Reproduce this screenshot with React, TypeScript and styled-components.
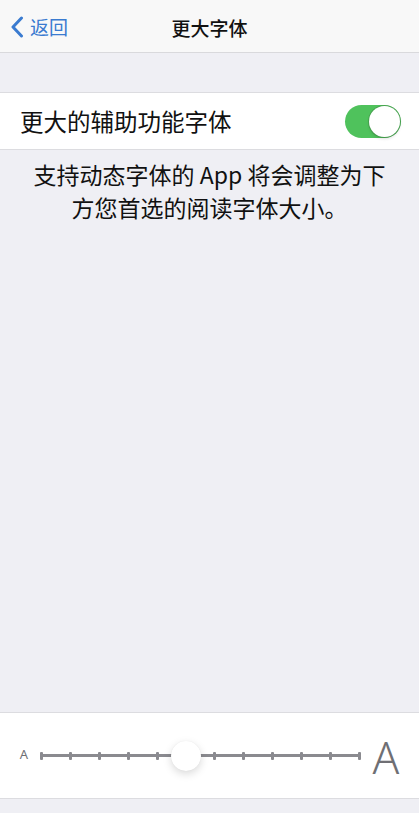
import styled, { createGlobalStyle } from 'styled-components'

const GlobalStyle = createGlobalStyle`
  html, body {
    margin: 0;
    padding: 0;
    background: #efeff4;
  }
  body {
    font-family: 'Noto Sans CJK SC', 'Noto Sans', sans-serif;
    -webkit-font-smoothing: antialiased;
  }
`

const STEPS = 12
const CURRENT_STEP = 5

const App = () => {
  const ticks = Array.from({ length: STEPS }, (_, i) => i)

  return (
    <>
      <GlobalStyle />
      <Screen>
        <NavBar>
          <BackButton>
            <svg width="14" height="22" viewBox="0 0 14 22" fill="none">
              <path
                d="M11.5 2 L3 11 L11.5 20"
                stroke="#3a7bd0"
                strokeWidth="3"
                strokeLinecap="round"
                strokeLinejoin="round"
              />
            </svg>
            <span>返回</span>
          </BackButton>
          <Title>更大字体</Title>
        </NavBar>

        <Group>
          <Row>
            <RowLabel>更大的辅助功能字体</RowLabel>
            <Toggle on>
              <Knob />
            </Toggle>
          </Row>
        </Group>

        <Footnote>
          支持动态字体的 App 将会调整为下
          <br />
          方您首选的阅读字体大小。
        </Footnote>

        <Spacer />

        <SliderPanel>
          <SizeLetter size={13}>A</SizeLetter>
          <Track>
            {ticks.map((i) => (i === CURRENT_STEP ? <TickGap key={i} /> : <Tick key={i} />))}
            <Thumb style={{ left: `${(CURRENT_STEP / (STEPS - 1)) * 100}%` }} />
          </Track>
          <SizeLetter size={44}>A</SizeLetter>
        </SliderPanel>
        <BottomFill />
      </Screen>
    </>
  )
}

const Screen = styled.div`
  display: flex;
  flex-direction: column;
  width: 419px;
  height: 813px;
  background: #efeff4;
  overflow: hidden;
`

const NavBar = styled.div`
  position: relative;
  display: flex;
  align-items: center;
  justify-content: center;
  height: 53px;
  flex-shrink: 0;
  background: #f8f8f8;
  border-bottom: 1px solid #d9d9dc;
  box-sizing: border-box;
`

const BackButton = styled.div`
  position: absolute;
  left: 10px;
  top: 0;
  bottom: 0;
  display: flex;
  align-items: center;
  gap: 6px;
  color: #3a7bd0;
  font-size: 19px;
  svg {
    margin-top: 1px;
  }
`

const Title = styled.div`
  font-size: 19px;
  font-weight: 500;
  color: #111;
  margin-top: 2px;
`

const Group = styled.div`
  margin-top: 39px;
  background: #fff;
  border-top: 1px solid #dcdce0;
  border-bottom: 1px solid #dcdce0;
`

const Row = styled.div`
  display: flex;
  align-items: center;
  justify-content: space-between;
  height: 56px;
  padding: 0 18px 0 20px;
`

const RowLabel = styled.div`
  font-size: 23.5px;
  color: #111;
`

const Toggle = styled.div<{ on: boolean }>`
  display: flex;
  align-items: center;
  justify-content: ${({ on }: { on: boolean }) => (on ? 'flex-end' : 'flex-start')};
  width: 56px;
  height: 33px;
  padding: 1px;
  box-sizing: border-box;
  border-radius: 17px;
  background: ${({ on }: { on: boolean }) => (on ? '#4fc25c' : '#e5e5ea')};
`

const Knob = styled.div`
  width: 31px;
  height: 31px;
  border-radius: 50%;
  background: #fff;
  box-shadow: 0 0 0 1px rgba(60, 110, 60, 0.35), 0 2px 3px rgba(0, 0, 0, 0.12);
`

const Footnote = styled.div`
  margin-top: 8px;
  text-align: center;
  font-size: 23px;
  line-height: 33px;
  color: #111;
`

const Spacer = styled.div`
  flex: 1;
`

const SliderPanel = styled.div`
  display: flex;
  align-items: center;
  height: 87px;
  flex-shrink: 0;
  padding: 0 19px 0 19px;
  box-sizing: border-box;
  background: #fff;
  border-top: 1px solid #dcdce0;
  border-bottom: 1px solid #dcdce0;
`

const SizeLetter = styled.div<{ size: number }>`
  font-family: 'Noto Sans', 'Liberation Sans', sans-serif;
  font-size: ${({ size }: { size: number }) => size}px;
  line-height: 1;
  color: ${({ size }: { size: number }) => (size > 20 ? '#6f6f74' : '#6f6f74')};
  font-weight: ${({ size }: { size: number }) => (size > 20 ? 300 : 400)};
  width: ${({ size }: { size: number }) => (size > 20 ? '28px' : '10px')};
  text-align: center;
  margin-top: ${({ size }: { size: number }) => (size > 20 ? '2px' : '-2px')};
`

const Track = styled.div`
  position: relative;
  flex: 1;
  display: flex;
  align-items: center;
  justify-content: space-between;
  height: 32px;
  margin: 0 12px 0 12px;

  &::before {
    content: '';
    position: absolute;
    left: 0;
    right: 0;
    top: 50%;
    height: 3px;
    margin-top: -1.5px;
    background: #8a8a8f;
  }
`

const Tick = styled.div`
  position: relative;
  width: 3px;
  height: 8px;
  margin: 0 -1px;
  border-radius: 1px;
  background: #8a8a8f;
`

const TickGap = styled.div`
  width: 1px;
`

const Thumb = styled.div`
  position: absolute;
  top: 50%;
  width: 30px;
  height: 30px;
  margin-left: -15px;
  margin-top: -15px;
  border-radius: 50%;
  background: #fff;
  box-shadow: 0 3px 8px rgba(0, 0, 0, 0.15), 0 0 1px rgba(0, 0, 0, 0.08);
`

const BottomFill = styled.div`
  height: 14px;
  flex-shrink: 0;
`

export default App
